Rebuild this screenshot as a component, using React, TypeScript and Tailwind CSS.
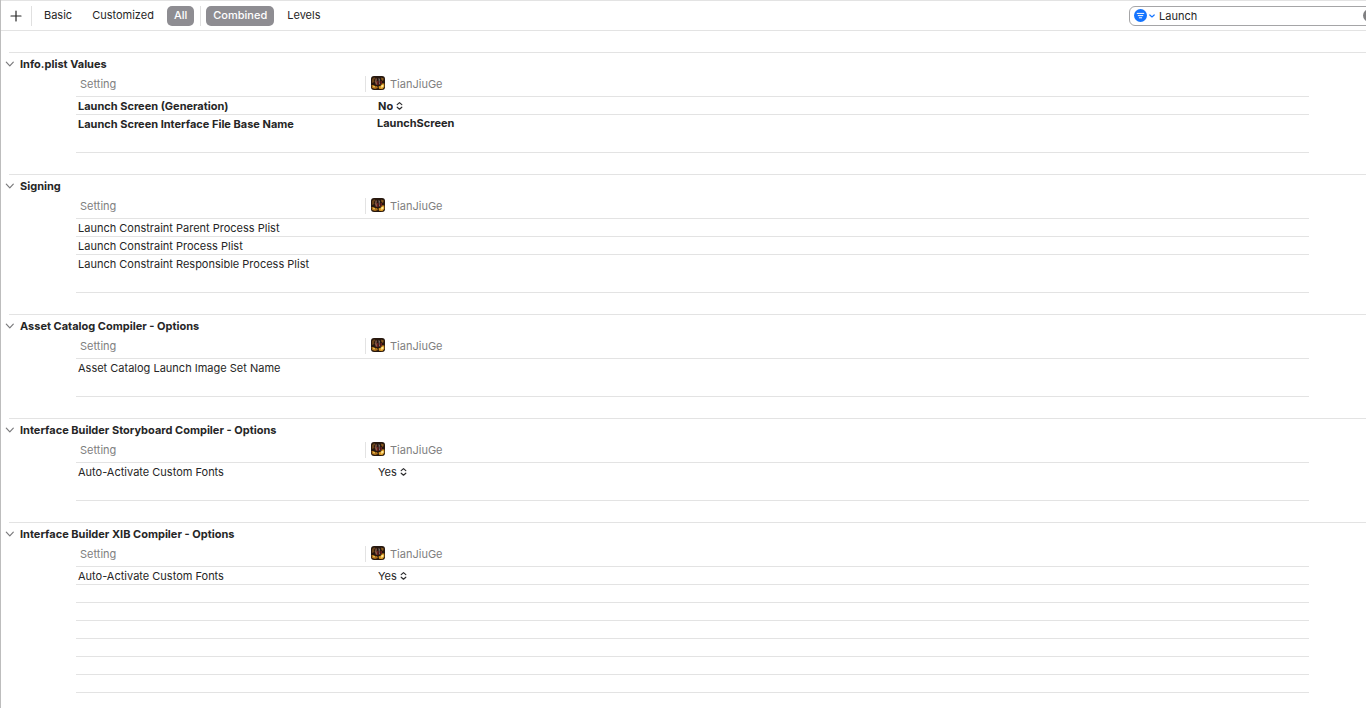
import { useState } from "react";
import { clsx } from "clsx";

type Setting = {
  name: string;
  value?: string;
  kind?: "select" | "text";
  modified?: boolean;
};

type Group = {
  title: string;
  settings: Setting[];
  emptyRows?: number;
};

const groups: Group[] = [
  {
    title: "Info.plist Values",
    settings: [
      { name: "Launch Screen (Generation)", value: "No", kind: "select", modified: true },
      { name: "Launch Screen Interface File Base Name", value: "LaunchScreen", modified: true },
    ],
  },
  {
    title: "Signing",
    settings: [
      { name: "Launch Constraint Parent Process Plist" },
      { name: "Launch Constraint Process Plist" },
      { name: "Launch Constraint Responsible Process Plist" },
    ],
  },
  {
    title: "Asset Catalog Compiler - Options",
    settings: [{ name: "Asset Catalog Launch Image Set Name" }],
  },
  {
    title: "Interface Builder Storyboard Compiler - Options",
    settings: [{ name: "Auto-Activate Custom Fonts", value: "Yes", kind: "select" }],
  },
  {
    title: "Interface Builder XIB Compiler - Options",
    settings: [{ name: "Auto-Activate Custom Fonts", value: "Yes", kind: "select" }],
    emptyRows: 7,
  },
];

function TargetIcon() {
  return (
    <svg width="14" height="14" viewBox="0 0 14 14" className="shrink-0" aria-hidden="true">
      <rect width="14" height="14" rx="3" fill="#26170e" />
      <path d="M1 3 3 1.2 4.5 2 3 4 3.5 6 1 7Z" fill="#6b4519" />
      <path d="M4.5 2.5 6 2.5 5.5 5 6.5 8 5 9 4 6Z" fill="#8a5a48" />
      <path d="M7.5 2 9 3 8.5 6 9.5 9 8 8Z" fill="#7c7072" />
      <path d="M10 1.5 12.8 2.5 12 5 10.5 4Z" fill="#8c5c1e" />
      <path d="M6 5h1.5v4H6zM9.5 5H11v3H9.5z" fill="#6b1c1c" />
      <path d="M.5 9 3 9 4 10.3 6 10 7 12 4 13 1 12Z" fill="#b07018" />
      <path d="M7.5 10.5 10 9.5 11 7.5 13.3 7.5 13.3 11 11.3 13.2 8 12.8Z" fill="#dc9c28" />
      <path d="M10.5 9 12.5 9 12.3 11 10 11.8Z" fill="#ffe694" />
      <path d="M2 10.3h2v1H2z" fill="#f3cf63" />
    </svg>
  );
}

function Disclosure({ open }: { open: boolean }) {
  return (
    <svg
      width="10"
      height="10"
      viewBox="0 0 10 10"
      fill="none"
      stroke="#7a7a7c"
      strokeWidth="1.2"
      strokeLinecap="round"
      strokeLinejoin="round"
      className={clsx(!open && "-rotate-90")}
      aria-hidden="true"
    >
      <path d="M1.3 3.2 4.8 6.8 8.3 3.2" />
    </svg>
  );
}

function UpDown() {
  return (
    <svg
      width="7"
      height="10"
      viewBox="0 0 7 10"
      fill="none"
      stroke="#2c2c2e"
      strokeWidth="1.2"
      strokeLinecap="round"
      strokeLinejoin="round"
      aria-hidden="true"
    >
      <path d="M1.2 3.6 3.5 1.6 5.8 3.6M1.2 6.2 3.5 8.2 5.8 6.2" />
    </svg>
  );
}

function ScopeButton({ label, active, onClick }: { label: string; active: boolean; onClick: () => void }) {
  return (
    <button
      type="button"
      aria-pressed={active}
      onClick={onClick}
      className={clsx(
        "flex h-5 items-center rounded-[5px] px-[7px] pb-px",
        active ? "bg-[#8e8d92] font-medium text-white" : "text-[#262626]"
      )}
    >
      {label}
    </button>
  );
}

function Toolbar() {
  const [scope, setScope] = useState("All");
  const [view, setView] = useState("Combined");
  const [query, setQuery] = useState("Launch");

  return (
    <header className="flex h-[31px] shrink-0 items-center overflow-hidden border-y border-[#e3e3e3] pl-[9px]">
      <button type="button" aria-label="Add build setting" className="text-[#262626]">
        <svg width="12" height="12" viewBox="0 0 12 12" stroke="currentColor" strokeWidth="1.2" strokeLinecap="round">
          <path d="M6 1v10M1 6h10" />
        </svg>
      </button>
      <div className="ml-[9px] h-5 w-px bg-[#e0e0e0]" />
      <div className="ml-[5px] flex gap-1.5">
        {["Basic", "Customized", "All"].map((item) => (
          <ScopeButton key={item} label={item} active={scope === item} onClick={() => setScope(item)} />
        ))}
      </div>
      <div className="ml-1.5 h-5 w-px bg-[#e0e0e0]" />
      <div className="ml-[5px] flex gap-1.5">
        {["Combined", "Levels"].map((item) => (
          <ScopeButton key={item} label={item} active={view === item} onClick={() => setView(item)} />
        ))}
      </div>

      {/* search field runs on past the edge of the pane */}
      <div className="-mr-4 ml-auto flex h-5 w-[253px] shrink-0 items-center rounded-[6px] border border-[#a5a5a7] pl-1 pr-[5px]">
        <button type="button" aria-label="Filter options" className="flex shrink-0 items-center gap-0.5">
          <svg width="13" height="13" viewBox="0 0 13 13" aria-hidden="true">
            <circle cx="6.5" cy="6.5" r="6.5" fill="#1474ff" />
            <path d="M3.2 4.4h6.6M4.2 6.6h4.6M5.3 8.8h2.4" stroke="#fff" strokeLinecap="round" />
          </svg>
          <svg width="6" height="6" viewBox="0 0 6 6" fill="none" stroke="#1474ff" strokeWidth="1.2" strokeLinecap="round" aria-hidden="true">
            <path d="M.8 2 3 4 5.2 2" />
          </svg>
        </button>
        <input
          aria-label="Filter settings"
          value={query}
          onChange={(e) => setQuery(e.target.value)}
          className="ml-1 min-w-0 flex-1 text-[#262626] outline-none"
        />
        <button type="button" aria-label="Clear filter" onClick={() => setQuery("")} className="shrink-0">
          <svg width="13" height="13" viewBox="0 0 13 13" aria-hidden="true">
            <circle cx="6.5" cy="6.5" r="6.5" fill="#7f7f81" />
            <path d="m4.5 4.5 4 4m0-4-4 4" stroke="#fff" strokeLinecap="round" />
          </svg>
        </button>
      </div>
    </header>
  );
}

function SettingValue({ setting }: { setting: Setting }) {
  if (setting.kind === "select") {
    return (
      <div className="flex h-[17px] items-center gap-[3px] pl-[13px] pt-px">
        <select
          aria-label={setting.name}
          defaultValue={setting.value}
          className={clsx("field-sizing-content h-4 appearance-none outline-none", setting.modified && "font-bold")}
        >
          <option>{setting.value}</option>
          <option>{setting.value === "Yes" ? "No" : "Yes"}</option>
        </select>
        <UpDown />
      </div>
    );
  }
  return (
    <input
      aria-label={setting.name}
      defaultValue={setting.value ?? ""}
      className={clsx("block h-4 w-full pl-3 outline-none", setting.modified && "font-bold")}
    />
  );
}

function SettingsGroup({ group }: { group: Group }) {
  const [open, setOpen] = useState(true);
  const filler = group.emptyRows ?? 0;

  return (
    <section className="mb-[21px]">
      <div className="ml-2 border-t border-[#e3e3e3]" />
      <h2>
        <button
          type="button"
          aria-expanded={open}
          onClick={() => setOpen(!open)}
          className="flex h-[21px] items-center gap-[5px] pl-1 font-bold"
        >
          <Disclosure open={open} />
          {group.title}
        </button>
      </h2>
      {open && (
        <div className="pl-[75px] pr-[57px]">
          <table className="w-full table-fixed border-separate border-spacing-0 border-b border-[#e3e3e3] text-left">
            <colgroup>
              <col className="w-[289px]" />
              <col />
            </colgroup>
            <thead>
              <tr className="text-[#808080]">
                <th className="h-[22px] pb-0.5 pl-1 font-normal">Setting</th>
                <th className="h-[22px] pb-0.5 font-normal">
                  <div className="flex items-center gap-[5px]">
                    <span className="flex h-4 items-center border-l border-[#e3e3e3] pb-0.5 pl-[5px]">
                      <TargetIcon />
                    </span>
                    TianJiuGe
                  </div>
                </th>
              </tr>
            </thead>
            <tbody>
              {group.settings.map((setting, i) => {
                const last = i === group.settings.length - 1 && filler === 0;
                const cell = clsx("border-t border-[#e3e3e3] align-top", last ? "h-[38px]" : "h-[18px]");
                return (
                  <tr key={setting.name}>
                    <td className={clsx(cell, "pl-0.5", setting.modified && "font-bold")}>
                      <div className="flex h-[17px] items-center">{setting.name}</div>
                    </td>
                    <td className={cell}>
                      <SettingValue setting={setting} />
                    </td>
                  </tr>
                );
              })}
              {Array.from({ length: filler }, (_, i) => (
                <tr key={i}>
                  <td colSpan={2} className="h-[18px] border-t border-[#e3e3e3]" />
                </tr>
              ))}
            </tbody>
          </table>
        </div>
      )}
    </section>
  );
}

export default function App() {
  return (
    <div className="flex h-screen flex-col overflow-hidden border-l border-[#bdbdbd] bg-white font-[Inter,Roboto,sans-serif] text-[11px] leading-4 text-[#262626]">
      <Toolbar />
      <main className="min-h-0 flex-1 overflow-hidden pt-[21px]">
        {groups.map((group) => (
          <SettingsGroup key={group.title} group={group} />
        ))}
      </main>
    </div>
  );
}
